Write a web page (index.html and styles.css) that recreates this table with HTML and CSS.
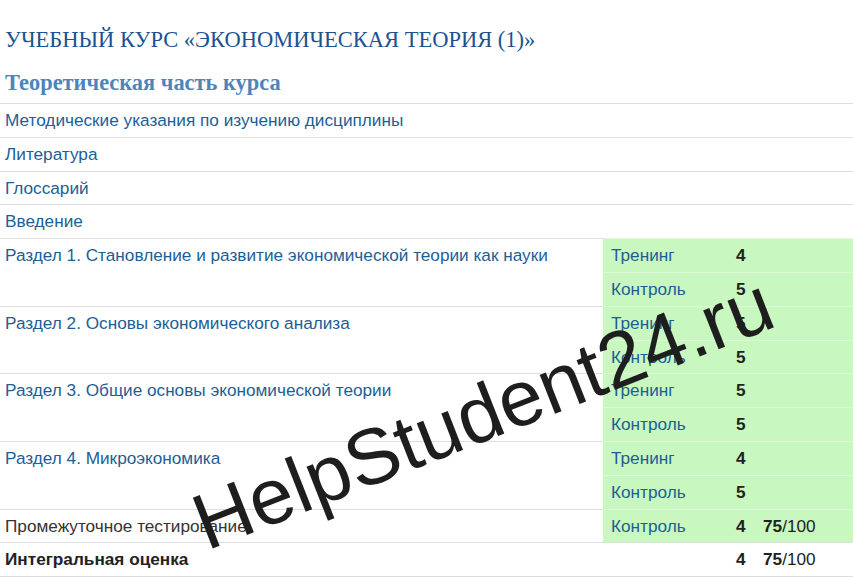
FILE: index.html
```html
<!DOCTYPE html>
<html lang="ru">
<head>
<meta charset="utf-8">
<title>Экономическая теория</title>
<link rel="stylesheet" href="styles.css">
</head>
<body>
<div class="page">
  <h1 class="course-title">УЧЕБНЫЙ КУРС «ЭКОНОМИЧЕСКАЯ ТЕОРИЯ (1)»</h1>
  <h2 class="part-title">Теоретическая часть курса</h2>
  <table class="grades">
    <colgroup>
      <col class="c-item">
      <col class="c-kind">
      <col class="c-mark">
      <col class="c-score">
    </colgroup>
    <tr><td class="item" colspan="4"><a href="#">Методические указания по изучению дисциплины</a></td></tr>
    <tr><td class="item" colspan="4"><a href="#">Литература</a></td></tr>
    <tr><td class="item" colspan="4"><a href="#">Глоссарий</a></td></tr>
    <tr><td class="item" colspan="4"><a href="#">Введение</a></td></tr>

    <tr><td class="item" rowspan="2"><a href="#">Раздел 1. Становление и развитие экономической теории как науки</a></td><td class="kind done"><a href="#">Тренинг</a></td><td class="mark done">4</td><td class="score done"></td></tr>
    <tr><td class="kind done"><a href="#">Контроль</a></td><td class="mark done">5</td><td class="score done"></td></tr>

    <tr><td class="item" rowspan="2"><a href="#">Раздел 2. Основы экономического анализа</a></td><td class="kind done"><a href="#">Тренинг</a></td><td class="mark done">5</td><td class="score done"></td></tr>
    <tr><td class="kind done"><a href="#">Контроль</a></td><td class="mark done">5</td><td class="score done"></td></tr>

    <tr><td class="item" rowspan="2"><a href="#">Раздел 3. Общие основы экономической теории</a></td><td class="kind done"><a href="#">Тренинг</a></td><td class="mark done">5</td><td class="score done"></td></tr>
    <tr><td class="kind done"><a href="#">Контроль</a></td><td class="mark done">5</td><td class="score done"></td></tr>

    <tr><td class="item" rowspan="2"><a href="#">Раздел 4. Микроэкономика</a></td><td class="kind done"><a href="#">Тренинг</a></td><td class="mark done">4</td><td class="score done"></td></tr>
    <tr><td class="kind done"><a href="#">Контроль</a></td><td class="mark done">5</td><td class="score done"></td></tr>

    <tr><td class="item plain">Промежуточное тестирование</td><td class="kind done"><a href="#">Контроль</a></td><td class="mark done">4</td><td class="score done"><b>75</b>/100</td></tr>
    <tr class="total"><td class="item"><b>Интегральная оценка</b></td><td class="kind"></td><td class="mark">4</td><td class="score"><b>75</b>/100</td></tr>
  </table>
  <div class="watermark">HelpStudent24.ru</div>
</div>
</body>
</html>
```
FILE: styles.css
```css
html, body {
  margin: 0;
  padding: 0;
  background: #ffffff;
}
.page {
  position: relative;
  width: 853px;
  overflow: hidden;
  font-family: "Liberation Sans", Arial, sans-serif;
  font-size: 17.2px;
  color: #333333;
}
.course-title {
  margin: 0;
  padding: 27px 0 0 5px;
  font-family: "Liberation Serif", "Times New Roman", serif;
  font-weight: normal;
  font-size: 22.5px;
  line-height: 26px;
  color: #1b5392;
}
.part-title {
  margin: 0;
  padding: 18px 0 8px 5px;
  font-family: "Liberation Serif", "Times New Roman", serif;
  font-weight: bold;
  font-size: 22.4px;
  line-height: 24px;
  color: #4d84ba;
}
.grades {
  width: 853px;
  border-collapse: collapse;
  table-layout: fixed;
  border-bottom: 1px solid #dddddd;
}
.c-item { width: 603px; }
.c-kind { width: 125px; }
.c-mark { width: 27px; }
.c-score { width: 98px; }
.grades td {
  border-top: 1px solid #dddddd;
  padding: 5px;
  line-height: 22.8px;
  vertical-align: top;
  white-space: nowrap;
}
.grades a {
  color: #1d5e96;
  text-decoration: none;
}
.grades td.item { padding-left: 5px; }
.grades td.kind { padding-left: 8px; }
.grades td.mark { padding-left: 8px; font-weight: bold; color: #222222; }
.grades td.score { padding-left: 8px; color: #222222; }
.grades td.done {
  background: #c8f7bf;
  border-top-color: #def8d8;
}
.grades tr.total td { color: #222222; }
.grades td.plain { color: #333333; }
.watermark {
  position: absolute;
  left: 206px;
  top: 484px;
  font-family: "Liberation Sans", Arial, sans-serif;
  font-size: 79px;
  line-height: 1;
  color: #1e1e1e;
  white-space: nowrap;
  transform-origin: 0 65px;
  transform: rotate(-21.5deg);
  pointer-events: none;
}
```
